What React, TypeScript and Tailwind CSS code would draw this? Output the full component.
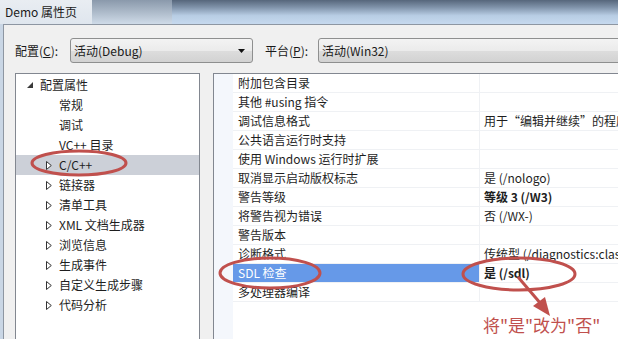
import React from "react";

type TreeItem = { label: string; level: 0 | 1; icon?: "open" | "closed"; selected?: boolean };

const tree: TreeItem[] = [
  { label: "配置属性", level: 0, icon: "open" },
  { label: "常规", level: 1 },
  { label: "调试", level: 1 },
  { label: "VC++ 目录", level: 1 },
  { label: "C/C++", level: 1, icon: "closed", selected: true },
  { label: "链接器", level: 1, icon: "closed" },
  { label: "清单工具", level: 1, icon: "closed" },
  { label: "XML 文档生成器", level: 1, icon: "closed" },
  { label: "浏览信息", level: 1, icon: "closed" },
  { label: "生成事件", level: 1, icon: "closed" },
  { label: "自定义生成步骤", level: 1, icon: "closed" },
  { label: "代码分析", level: 1, icon: "closed" },
];

type Prop = { name: string; value?: string; bold?: boolean; selected?: boolean };

const props: Prop[] = [
  { name: "附加包含目录" },
  { name: "其他 #using 指令" },
  { name: "调试信息格式", value: "用于“编辑并继续”的程序数据库 (/ZI)" },
  { name: "公共语言运行时支持" },
  { name: "使用 Windows 运行时扩展" },
  { name: "取消显示启动版权标志", value: "是 (/nologo)" },
  { name: "警告等级", value: "等级 3 (/W3)", bold: true },
  { name: "将警告视为错误", value: "否 (/WX-)" },
  { name: "警告版本" },
  { name: "诊断格式", value: "传统型 (/diagnostics:classic)" },
  { name: "SDL 检查", value: "是 (/sdl)", bold: true, selected: true },
  { name: "多处理器编译" },
];

function Combo({ text, className }: { text: string; className: string }) {
  return (
    <div
      className={`h-[25px] flex items-center justify-between border border-[#8e8f8f] rounded-[3px] bg-[linear-gradient(to_bottom,#f3f3f3_0%,#ebebeb_50%,#dddddd_51%,#d2d2d2_100%)] pl-[3px] pr-[7px] shrink-0 ${className}`}
    >
      <span className="text-[12px] text-[#1a1a1a] whitespace-nowrap">{text}</span>
      <svg width="7" height="4" viewBox="0 0 7 4">
        <polygon points="0,0 7,0 3.5,4" fill="#111" />
      </svg>
    </div>
  );
}

function Arrow({ icon }: { icon?: "open" | "closed" }) {
  if (icon === "open")
    return (
      <svg width="6" height="6" viewBox="0 0 6 6">
        <polygon points="6,0 6,6 0,6" fill="#3a3a3a" />
      </svg>
    );
  if (icon === "closed")
    return (
      <svg width="6" height="9" viewBox="0 0 6 9">
        <polygon points="0.5,0.5 5.3,4.5 0.5,8.5" fill="#fff" stroke="#333" strokeWidth="1" />
      </svg>
    );
  return null;
}

export default function App() {
  return (
    <div className="relative w-[618px] h-[339px] overflow-hidden bg-[#c9d6e5] font-['Noto_Sans_CJK_SC',sans-serif] text-[12px]">
      {/* title bar */}
      <div className="h-[24px] flex">
        <div className="w-[92px] flex items-center pl-[5px] bg-[linear-gradient(to_bottom,#e9edf2,#dfe6ee)]">
          <span className="text-[12px] text-[#1b1b1b]">Demo 属性页</span>
        </div>
        <div className="w-[80px] bg-[linear-gradient(to_bottom,#8a99ab,#cfdbe8)]" />
        <div className="flex-1 bg-[linear-gradient(to_bottom,#56667b_0%,#7f92a9_30%,#b8cde4_65%,#c6d9ee_100%)]" />
      </div>

      <div className="pl-[3px] h-[315px]">
        <div className="h-full overflow-hidden border-l border-t border-[#8d96a2] bg-[#f0f0f0] pl-[11px] pt-[13px]">
          {/* config row */}
          <div className="flex items-center h-[25px]">
            <span className="w-[55px] shrink-0 whitespace-nowrap text-[#1a1a1a]">
              配置(<span className="underline">C</span>):
            </span>
            <Combo text="活动(Debug)" className="w-[183px]" />
            <span className="ml-[12px] w-[53px] shrink-0 whitespace-nowrap text-[#1a1a1a]">
              平台(<span className="underline">P</span>):
            </span>
            <Combo text="活动(Win32)" className="w-[360px]" />
          </div>

          <div className="flex mt-[10px] gap-[13px]">
            {/* tree */}
            <div className="w-[185px] h-[280px] shrink-0 border border-[#828790] bg-white pt-px">
              {tree.map((t) => (
                <div
                  key={t.label}
                  className={`h-[20px] flex items-center text-[#1e1e1e] ${t.level === 0 ? "pl-[11px]" : "pl-[30px]"} ${t.selected ? "bg-[#ccd0d8]" : ""}`}
                >
                  <span className="w-[13px] flex items-center">
                    <Arrow icon={t.icon} />
                  </span>
                  <span>{t.label}</span>
                </div>
              ))}
            </div>

            {/* property grid */}
            <div className="flex-1 h-[280px] border-l border-t border-[#828790] bg-white flex">
              <div className="w-[19px] shrink-0 bg-[#f4f7fc]" />
              <div className="flex-1">
                {props.map((p) => (
                  <div key={p.name} className="h-[19px] flex border-b border-[#eff1f4]">
                    <div
                      className={`w-[246px] shrink-0 pl-[5px] flex items-center whitespace-nowrap ${p.selected ? "bg-[#6699e8] text-white" : "text-[#1e1e1e]"}`}
                    >
                      {p.name}
                    </div>
                    <div
                      className={`flex-1 border-l border-[#eff1f4] pl-[4px] flex items-center whitespace-nowrap overflow-hidden text-[#1e1e1e] ${p.bold ? "font-bold" : ""}`}
                    >
                      {p.value}
                    </div>
                  </div>
                ))}
              </div>
            </div>
          </div>
        </div>
      </div>

      {/* annotations */}
      <svg className="absolute inset-0 pointer-events-none" width="618" height="339" viewBox="0 0 618 339">
        <ellipse cx="79" cy="163" rx="47" ry="12" fill="none" stroke="#c0504d" strokeWidth="3" />
        <ellipse cx="270" cy="273" rx="50" ry="15" fill="none" stroke="#c0504d" strokeWidth="3" />
        <ellipse cx="519" cy="274" rx="56" ry="16" fill="none" stroke="#c0504d" strokeWidth="3" />
        <line x1="518" y1="277" x2="541" y2="304" stroke="#c0504d" strokeWidth="3" />
        <polygon points="550,316 533,306 545,297" fill="#c0504d" />
      </svg>
      <div className="absolute left-[483px] top-[315px] text-[17px] leading-[20px] text-[#c0504d] whitespace-nowrap">
        将"是"改为"否"
      </div>
    </div>
  );
}
